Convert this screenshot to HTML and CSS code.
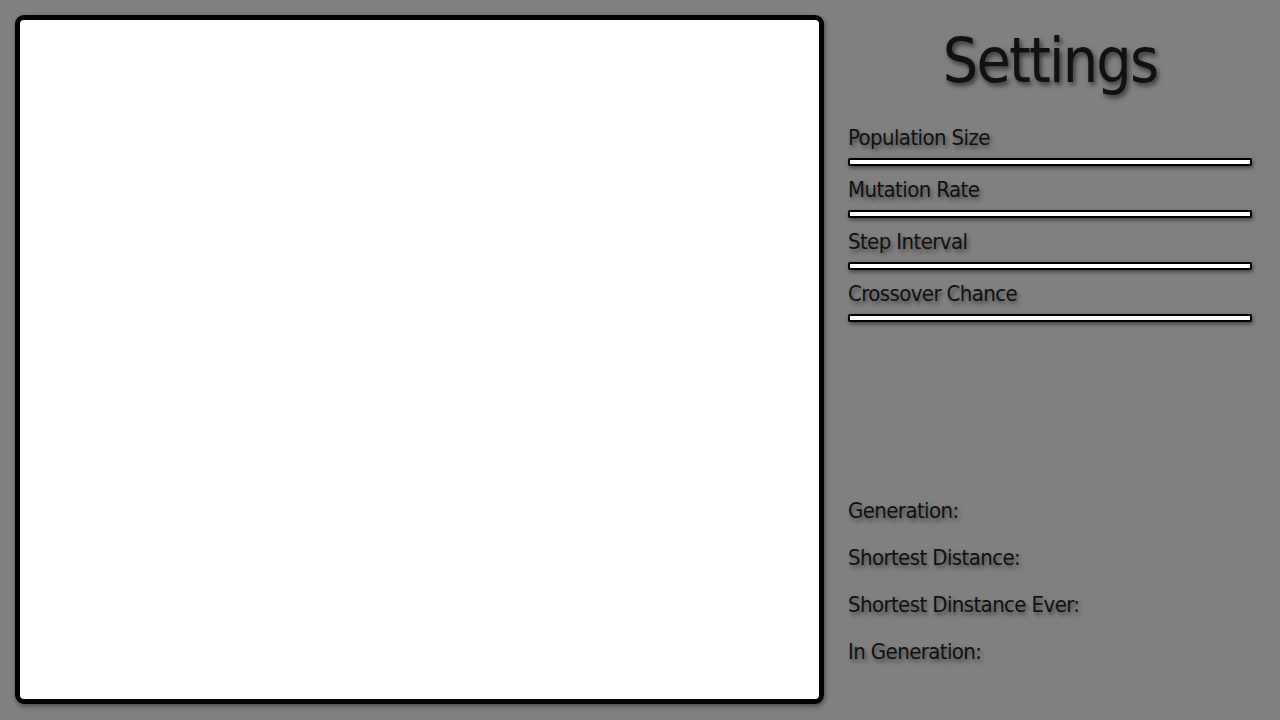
FILE: index.html
```html
<!DOCTYPE html>
<html>
<head>
<meta charset="utf-8">
<link rel="stylesheet" href="styles.css">
</head>
<body>
<div class="app">
  <div class="canvas-box"></div>
  <div class="sidebar">
    <h1 class="title">Settings</h1>
    <div class="settings">
      <div class="setting"><div class="label">Population Size</div><div class="slider"></div></div>
      <div class="setting"><div class="label">Mutation Rate</div><div class="slider"></div></div>
      <div class="setting"><div class="label">Step Interval</div><div class="slider"></div></div>
      <div class="setting"><div class="label">Crossover Chance</div><div class="slider"></div></div>
    </div>
    <div class="stats">
      <div class="stat">Generation:</div>
      <div class="stat">Shortest Distance:</div>
      <div class="stat">Shortest Dinstance Ever:</div>
      <div class="stat">In Generation:</div>
    </div>
  </div>
</div>
</body>
</html>
```
FILE: styles.css
```css
html, body {
  margin: 0;
  padding: 0;
  background: #808080;
  width: 1280px;
  height: 720px;
  overflow: hidden;
}
.app {
  display: flex;
  padding: 15px;
  gap: 24px;
  font-family: "DejaVu Sans Condensed", "DejaVu Sans", sans-serif;
  font-stretch: condensed;
  color: #111;
}
.canvas-box {
  width: 799px;
  height: 679px;
  background: #fff;
  border: 5px solid #000;
  border-radius: 9px;
  box-shadow: 1px 2px 5px rgba(0,0,0,0.45);
  flex-shrink: 0;
}
.sidebar {
  width: 404px;
  display: flex;
  flex-direction: column;
}
.title {
  margin: 10px 0 0;
  text-align: center;
  font-weight: normal;
  font-size: 62px;
  line-height: 72px;
  letter-spacing: -1.8px;
  text-shadow: 2px 3px 5px rgba(0,0,0,0.6);
}
.settings {
  margin-top: 25px;
  display: flex;
  flex-direction: column;
  gap: 8px;
}
.setting {
  display: flex;
  flex-direction: column;
  gap: 4px;
}
.label, .stat {
  font-size: 22px;
  line-height: 32px;
  letter-spacing: -0.6px;
  text-shadow: 2px 3px 4px rgba(0,0,0,0.5);
}
.slider {
  height: 4px;
  background: #fff;
  border: 2px solid #000;
  border-radius: 2px;
  box-shadow: 1px 2px 4px rgba(0,0,0,0.5);
}
.stats {
  margin-top: 173px;
  display: flex;
  flex-direction: column;
  gap: 15px;
}
```
